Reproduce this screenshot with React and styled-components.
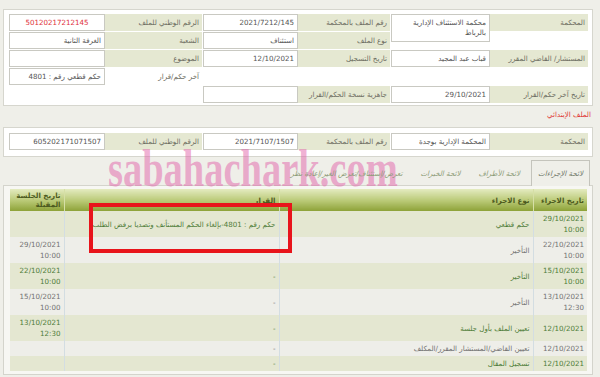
import React from 'react';
import styled, { createGlobalStyle } from 'styled-components';

const GlobalStyle = createGlobalStyle`
  html, body {
    margin: 0;
    padding: 0;
    background: #efefe9;
  }
  body {
    font-family: "DejaVu Sans", "Noto Sans", sans-serif;
    font-size: 7.1px;
    color: #666;
  }
  * {
    box-sizing: border-box;
  }
`;

const Page = styled.div`
  position: relative;
  direction: rtl;
  width: 600px;
  height: 377px;
  overflow: hidden;
  padding: 9px 7px 0 3px;
`;

const Panel = styled.section`
  background: #fff;
  border: 1px solid #d6d6ce;
  padding: ${({ $second }) => ($second ? '5px 4px 6px 4px' : '4px 4px 2px 4px')};
`;

const FieldGrid = styled.div`
  display: grid;
  grid-template-columns: 98px 100px 92px 96px 97px 97px;
  grid-auto-rows: 17px;
  row-gap: 1px;
`;

const Label = styled.div`
  display: flex;
  align-items: center;
  padding: 0 3px;
  background: ${({ $plain }) => ($plain ? 'transparent' : '#e5e8d2')};
  color: #6e6e62;
  white-space: nowrap;
  overflow: hidden;
`;

const Value = styled.div`
  display: flex;
  flex-direction: ${({ $tall }) => ($tall ? 'column' : 'row')};
  align-items: ${({ $tall }) => ($tall ? 'flex-start' : 'center')};
  justify-content: ${({ $center }) => ($center ? 'center' : 'flex-start')};
  margin-left: 1px;
  padding: ${({ $tall }) => ($tall ? '3px 3px 0' : '0 3px')};
  background: #fff;
  border: 1px solid #c9c9c2;
  color: ${({ $red }) => ($red ? '#e0323c' : '#555')};
  line-height: 10px;
  white-space: nowrap;
  ${({ $tall }) => $tall && 'grid-row: span 2; align-self: start; height: 28px;'}
`;

const Blank = styled.div``;

const Heading = styled.h3`
  margin: 0;
  height: 21px;
  padding: 3px 2px 0;
  line-height: 12px;
  font-size: 7.1px;
  font-weight: normal;
  color: #e03a36;
`;

const TabBar = styled.div`
  display: flex;
  align-items: stretch;
  gap: 4px;
  height: 29px;
  padding: 3px 3px 0 0;
  margin-bottom: -1px;
`;

const Tab = styled.div`
  display: flex;
  align-items: center;
  padding: 0 6px;
  font-style: italic;
  white-space: nowrap;
  color: ${({ $active }) => ($active ? '#707868' : '#8d9c78')};
  background: ${({ $active }) => ($active ? '#efefe9' : 'transparent')};
  border: 1px solid ${({ $active }) => ($active ? '#c4c4bc' : 'transparent')};
  border-bottom: none;
  position: relative;
  z-index: 1;
`;

const TabPanel = styled.div`
  background: #f7f7f3;
  border: 1px solid #d4d4cc;
  padding: 3px 5px 3px 6px;
`;

const Table = styled.table`
  width: 100%;
  border-collapse: collapse;
  table-layout: fixed;
`;

const Th = styled.th`
  width: ${({ $w }) => ($w ? `${$w}px` : 'auto')};
  height: 22px;
  padding: 1px 3px;
  text-align: right;
  vertical-align: middle;
  line-height: 9px;
  font-weight: bold;
  color: #4d5a1e;
  background: linear-gradient(#e4ebc0, #b8c874 55%, #8da238);
  border-left: 1px solid #d6dfa6;
  &:last-child {
    border-left: none;
  }
`;

const Row = styled.tr`
  background: ${({ $alt }) => ($alt ? '#eeeee9' : '#e4e7d1')};
  color: ${({ $alt }) => ($alt ? '#737373' : '#4f7d39')};
`;

const Td = styled.td`
  padding: 2px 3px;
  text-align: right;
  vertical-align: middle;
  line-height: 11px;
  white-space: nowrap;
  border-left: 1px solid #d3dde2;
  &:last-child {
    border-left: none;
  }
`;

const Line = styled.span`
  display: block;
  white-space: nowrap;
`;

const Watermark = styled.div`
  position: absolute;
  left: 108px;
  top: 143px;
  direction: ltr;
  font-family: "Liberation Serif", serif;
  font-weight: bold;
  font-size: 52px;
  line-height: 52px;
  color: rgba(225, 100, 170, 0.5);
  transform: scaleX(0.74);
  transform-origin: left top;
  pointer-events: none;
  white-space: nowrap;
`;

const Highlight = styled.div`
  position: absolute;
  left: 89px;
  top: 203px;
  width: 203px;
  height: 50px;
  border: 4px solid #e8141b;
  pointer-events: none;
`;

const rows = [
  [['29/10/2021', '10:00'], 'حكم قطعي', 'حكم رقم : 4801-بإلغاء الحكم المستأنف وتصديا برفض الطلب', []],
  [['22/10/2021', '10:00'], 'التأخير', '-', ['29/10/2021', '10:00']],
  [['15/10/2021', '10:00'], 'التأخير', '-', ['22/10/2021', '10:00']],
  [['13/10/2021', '12:30'], 'التأخير', '-', ['15/10/2021', '10:00']],
  [['12/10/2021'], 'تعيين الملف بأول جلسة', '-', ['13/10/2021', '12:30']],
  [['12/10/2021'], 'تعيين القاضي/المستشار المقرر/المكلف', '-', []],
  [['12/10/2021'], 'تسجيل المقال', '-', []],
];

const Lines = ({ items }) => items.map((t) => <Line key={t}>{t}</Line>);

export default function App() {
  return (
    <>
      <GlobalStyle />
      <Page>
        <Panel>
          <FieldGrid>
            <Label>المحكمة</Label>
            <Value $tall>
              <Lines items={['محكمة الاستئناف الإدارية', 'بالرباط']} />
            </Value>
            <Label>رقم الملف بالمحكمة</Label>
            <Value>2021/7212/145</Value>
            <Label>الرقم الوطني للملف</Label>
            <Value $red $center>50120217212145</Value>

            <Blank />
            <Label>نوع الملف</Label>
            <Value>استئناف</Value>
            <Label>الشعبة</Label>
            <Value>الغرفة الثانية</Value>

            <Label>المستشار/ القاضي المقرر</Label>
            <Value>قباب عبد المجيد</Value>
            <Label>تاريخ التسجيل</Label>
            <Value>12/10/2021</Value>
            <Label>الموضوع</Label>
            <Value />

            <Blank />
            <Blank />
            <Blank />
            <Blank />
            <Label $plain>آخر حكم/قرار</Label>
            <Value>حكم قطعي رقم : 4801</Value>

            <Label>تاريخ آخر حكم/القرار</Label>
            <Value>29/10/2021</Value>
            <Label>جاهزية نسخة الحكم/القرار</Label>
            <Value />
          </FieldGrid>
        </Panel>

        <Heading>الملف الإبتدائي</Heading>

        <Panel $second>
          <FieldGrid>
            <Label>المحكمة</Label>
            <Value>المحكمة الإدارية بوجدة</Value>
            <Label>رقم الملف بالمحكمة</Label>
            <Value>2021/7107/1507</Value>
            <Label>الرقم الوطني للملف</Label>
            <Value>605202171071507</Value>
          </FieldGrid>
        </Panel>

        <TabBar>
          <Tab $active>لائحة الإجراءات</Tab>
          <Tab>لائحة الأطراف</Tab>
          <Tab>لائحة الخبرات</Tab>
          <Tab>تعرض/إستئناف/تعرض الغير/إعادة نظر</Tab>
        </TabBar>

        <TabPanel>
          <Table>
            <thead>
              <tr>
                <Th $w={54}>تاريخ الاجراء</Th>
                <Th $w={254}>نوع الاجراء</Th>
                <Th>القرار</Th>
                <Th $w={54}>تاريخ الجلسة المقبلة</Th>
              </tr>
            </thead>
            <tbody>
              {rows.map(([date, type, decision, next], i) => (
                <Row key={i} $alt={i % 2 === 1}>
                  <Td><Lines items={date} /></Td>
                  <Td>{type}</Td>
                  <Td>{decision}</Td>
                  <Td><Lines items={next} /></Td>
                </Row>
              ))}
            </tbody>
          </Table>
        </TabPanel>

        <Watermark>sabahachark.com</Watermark>
        <Highlight />
      </Page>
    </>
  );
}
